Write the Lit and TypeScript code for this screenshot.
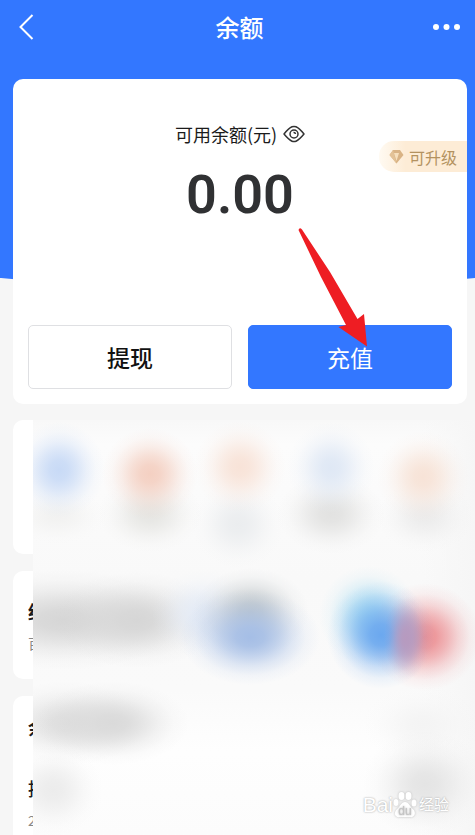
import { LitElement, html, css, svg } from "lit";
import { customElement } from "lit/decorators.js";

interface Blob {
  x: number;
  y: number;
  rx: number;
  ry: number;
  fill: string;
}

// Soft colour patches of the hidden content.
const blobs: Blob[] = [
  { x: 24, y: 96, rx: 50, ry: 28, fill: "#f2f2f1" },
  { x: 117, y: 94, rx: 52, ry: 38, fill: "#e6e6e3" },
  { x: 205, y: 104, rx: 46, ry: 44, fill: "#ebedef" },
  { x: 298, y: 94, rx: 54, ry: 40, fill: "#e2e2e1" },
  { x: 392, y: 96, rx: 48, ry: 36, fill: "#ececec" },
  { x: 26, y: 50, rx: 46, ry: 48, fill: "#c8daf6" },
  { x: 117, y: 54, rx: 48, ry: 46, fill: "#f4d0c2" },
  { x: 207, y: 47, rx: 46, ry: 46, fill: "#f8e3d8" },
  { x: 298, y: 48, rx: 44, ry: 46, fill: "#dfe8f5" },
  { x: 390, y: 57, rx: 46, ry: 46, fill: "#f7e3d7" },
  { x: 30, y: 200, rx: 120, ry: 50, fill: "#d6d6d6" },
  { x: 104, y: 200, rx: 84, ry: 48, fill: "#d6d6d6" },
  { x: 170, y: 194, rx: 52, ry: 44, fill: "#e4ebf6" },
  { x: 218, y: 192, rx: 58, ry: 44, fill: "#c2c8cb" },
  { x: 217, y: 217, rx: 70, ry: 48, fill: "#a5bee6" },
  { x: 336, y: 196, rx: 50, ry: 50, fill: "#addff2" },
  { x: 392, y: 217, rx: 56, ry: 54, fill: "#ec9094" },
  { x: 348, y: 215, rx: 54, ry: 54, fill: "#6ba8ef" },
  { x: 373, y: 218, rx: 22, ry: 42, fill: "#b79abf" },
  { x: 34, y: 303, rx: 78, ry: 42, fill: "#dedede" },
  { x: 80, y: 303, rx: 76, ry: 42, fill: "#dadada" },
  { x: 20, y: 370, rx: 50, ry: 46, fill: "#ececec" },
  { x: 390, y: 305, rx: 60, ry: 40, fill: "#f4f4f4" },
  { x: 392, y: 364, rx: 62, ry: 54, fill: "#e4e4e4" },
];

@customElement("app-root")
export class AppRoot extends LitElement {
  static styles = css`
    :host {
      display: flex;
      flex-direction: column;
      position: relative;
      overflow: hidden;
      min-height: 100vh;
      background: #f6f6f6;
      color: #1b1b1b;
      font-family: "Noto Sans CJK SC", "Noto Sans", sans-serif;
    }
    * { box-sizing: border-box; }
    svg { display: block; }
    button {
      font: inherit;
      color: inherit;
      padding: 0;
      border: 0;
      background: none;
      cursor: pointer;
    }
    .backdrop {
      position: absolute;
      top: 0;
      left: -10%;
      width: 120%;
      height: 287px;
      background: #3377ff;
      border-radius: 0 0 50% 50% / 0 0 20px 20px;
    }
    header {
      position: relative;
      display: grid;
      grid-template-columns: 48px 1fr 48px;
      align-items: center;
      height: 54px;
      padding: 0 8px 0 12px;
      margin-bottom: 25px;
      color: #fff;
    }
    h1 {
      margin: 0;
      font-size: 24px;
      line-height: 32px;
      font-weight: 500;
      text-align: center;
    }
    .nav {
      display: flex;
      align-items: center;
      height: 48px;
    }
    .more { justify-content: flex-end; }
    .card {
      background: #fff;
      border-radius: 10px;
      margin: 0 8px 0 13px;
    }
    .balance {
      position: relative;
      display: flex;
      flex-direction: column;
      align-items: center;
      padding: 41px 15px 15px;
    }
    .label {
      display: flex;
      align-items: center;
      gap: 6px;
      font-size: 18px;
      line-height: 28px;
    }
    .amount {
      margin: 15px 0 98px;
      font-family: Roboto, "Liberation Sans", sans-serif;
      font-size: 54px;
      line-height: 64px;
      font-weight: 600;
      color: #303133;
    }
    .upgrade {
      position: absolute;
      top: 62px;
      right: 0;
      display: flex;
      align-items: center;
      gap: 5px;
      height: 31px;
      padding: 0 10px;
      border-radius: 15px 0 0 15px;
      background: linear-gradient(90deg, #fffaf2, #fdecd6 30%, #fdecd6);
      color: #b3925f;
      font-size: 16px;
      line-height: 24px;
    }
    .actions {
      display: grid;
      grid-template-columns: 1fr 1fr;
      gap: 16px;
      width: 100%;
    }
    .action { position: relative; }
    .action button {
      width: 100%;
      height: 64px;
      border: 1px solid #dfe0e3;
      border-radius: 5px;
      font-size: 23px;
      line-height: 32px;
      font-weight: 500;
      color: #111;
    }
    .action .primary {
      background: #3377ff;
      border-color: #3377ff;
      color: #fff;
      font-weight: 400;
    }
    .arrow {
      position: absolute;
      left: 50px;
      bottom: 42px;
      pointer-events: none;
    }
    .lower {
      position: relative;
      flex: 1;
      display: flex;
      flex-direction: column;
      gap: 17px;
      padding-top: 16px;
    }
    .row {
      padding-left: 15px;
      font-size: 18px;
      line-height: 24px;
    }
    .row p {
      margin: 0;
      width: 5px;
      overflow: hidden;
      white-space: nowrap;
    }
    .strong { font-weight: 700; }
    .small {
      font-size: 14px;
      color: #888;
    }
    .shortcuts { height: 134px; }
    .promo {
      height: 108px;
      padding-top: 28px;
    }
    .promo .small { margin-top: 8px; }
    .list {
      flex: 1;
      border-radius: 10px 10px 0 0;
      padding-top: 19px;
    }
    .list .item {
      margin-top: 37px;
      font-weight: 500;
    }
    .list .small { margin-top: 8px; }
    .veil {
      position: absolute;
      top: 16px;
      left: 33px;
      right: 0;
      bottom: 0;
      overflow: hidden;
      background:
        linear-gradient(90deg, transparent 88%, #f6f6f6),
        linear-gradient(#f8f8f8, #fcfcfc 6%, #f9f9f9 38%, #fafafa 65%, #fefefe 80%, #fcfcfc);
    }
    .veil svg {
      width: 100%;
      height: 100%;
    }
    .mark {
      position: absolute;
      right: 26px;
      bottom: 16px;
      display: flex;
      align-items: center;
      color: #fff;
      font-family: "Liberation Sans", "Noto Sans CJK SC", sans-serif;
      font-size: 21px;
      line-height: 28px;
      text-shadow: 0 0 2px #999;
    }
    .mark svg { filter: drop-shadow(0 0 1px #bbb); }
    .mark .cn {
      font-size: 15px;
      margin-left: 2px;
    }
  `;

  render() {
    return html`
      <div class="backdrop"></div>
      <header>
        <button class="nav" aria-label="返回">
          <svg width="28" height="28" viewBox="0 0 28 28" fill="none" stroke="#fff" stroke-width="2">
            <path d="M20.500 2 8.500 14 20.500 26" />
          </svg>
        </button>
        <h1>余额</h1>
        <button class="nav more" aria-label="更多">
          <svg width="34" height="8" viewBox="0 0 34 8" fill="#fff">
            <circle cx="3" cy="4" r="3" /><circle cx="13.500" cy="4" r="3" /><circle cx="24" cy="4" r="3" />
          </svg>
        </button>
      </header>

      <section class="card balance">
        <div class="label">
          <span>可用余额(元)</span>
          <svg width="22" height="18" viewBox="0 0 22 18" fill="none" stroke="#333" stroke-width="1.500">
            <path d="M1 9 Q6 3 9 1.800 Q11 1 13 1.800 Q16 3 21 9 Q16 15 13 16.200 Q11 17 9 16.200 Q6 15 1 9Z" stroke-linejoin="round" />
            <circle cx="11" cy="9" r="4" />
            <path d="M10.500 7.500 A1.800 1.800 0 0 1 12.500 9" />
          </svg>
        </div>
        <div class="amount">0.00</div>
        <button class="upgrade">
          <svg width="15" height="15" viewBox="0 0 15 15">
            <path d="M4 1H11L14.500 6 7.500 14.500 .5 6Z" fill="#d9b385" />
            <path d="M4 1 7.500 14.500 .5 6Z" fill="#e3c297" />
            <path d="M5 4H10L7.500 12Z" fill="#f6dfbd" />
          </svg>
          <span>可升级</span>
        </button>
        <div class="actions">
          <div class="action"><button>提现</button></div>
          <div class="action">
            <button class="primary">充值</button>
            <svg class="arrow" width="70" height="119" viewBox="0 0 70 119">
              <path d="M.5 2Q1.500-1 4 1.500L32 44 59.500 91 66 86 69 118.500 40.500 99 48 97 23 49Z" fill="#ee1d23" />
            </svg>
          </div>
        </div>
      </section>

      <div class="lower">
        <section class="card row shortcuts"></section>
        <section class="card row promo">
          <p class="strong">红</p>
          <p class="small">百</p>
        </section>
        <section class="card row list">
          <p class="strong">余</p>
          <p class="item">提</p>
          <p class="small">2</p>
        </section>
        <div class="veil">
          <svg viewBox="0 0 442 415" preserveAspectRatio="none" aria-hidden="true">
            <defs>
              ${blobs.map(
                (b, i) => svg`<radialGradient id="soft${i}">
                  <stop offset="0" stop-color=${b.fill} />
                  <stop offset=".2" stop-color=${b.fill} stop-opacity=".9" />
                  <stop offset=".4" stop-color=${b.fill} stop-opacity=".64" />
                  <stop offset=".6" stop-color=${b.fill} stop-opacity=".33" />
                  <stop offset=".8" stop-color=${b.fill} stop-opacity=".1" />
                  <stop offset="1" stop-color=${b.fill} stop-opacity="0" />
                </radialGradient>`
              )}
            </defs>
            ${blobs.map((b, i) => svg`<ellipse cx=${b.x} cy=${b.y} rx=${b.rx} ry=${b.ry} fill="url(#soft${i})" />`)}
          </svg>
        </div>
        <div class="mark">
          <span>Bai</span>
          <svg width="24" height="28" viewBox="0 0 24 28" fill="#fff">
            <ellipse cx="8.500" cy="5" rx="3" ry="4" />
            <ellipse cx="15.500" cy="5" rx="3" ry="4" />
            <ellipse cx="3" cy="11.500" rx="2.500" ry="3.500" />
            <ellipse cx="21" cy="12" rx="2.500" ry="3.500" />
            <path d="M12 11C16 11 17 16 20 18C24 22 21 27 17 26H7C2 27 0 22 4 18C7 16 8 11 12 11Z" />
            <text x="12" y="24" font-size="12" text-anchor="middle" fill="#c4c4c4">du</text>
          </svg>
          <span class="cn">经验</span>
        </div>
      </div>
    `;
  }
}
